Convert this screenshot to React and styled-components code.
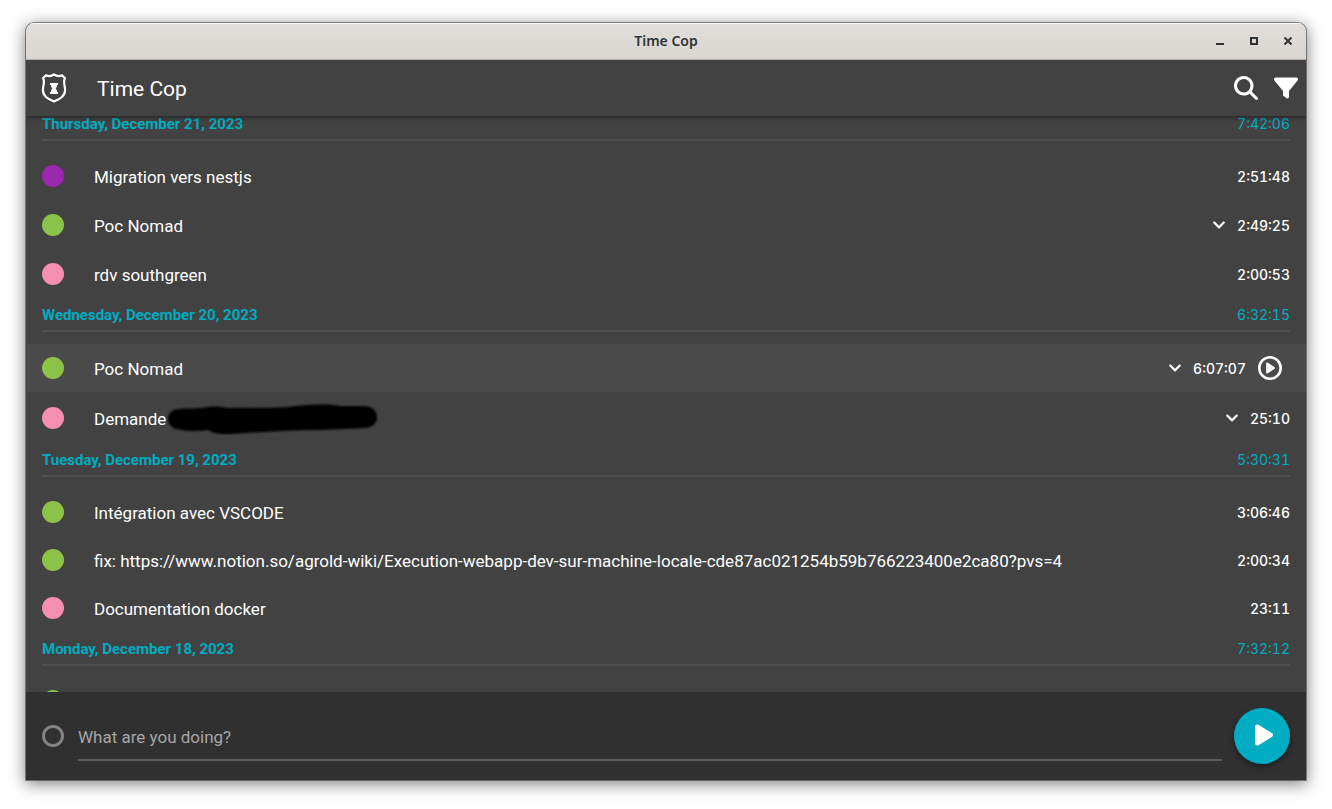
import React, { useLayoutEffect, useRef } from "react";
import styled, { createGlobalStyle } from "styled-components";
import { FaChevronDown } from "react-icons/fa";
import { FaMagnifyingGlass, FaFilter, FaPlay } from "react-icons/fa6";

const GlobalStyle = createGlobalStyle`
  *, *::before, *::after { box-sizing: border-box; }
  body {
    margin: 0;
    background: #fff;
    color: #fff;
    font-family: Roboto, "Liberation Sans", sans-serif;
    font-size: 17px;
  }
`;

const Desktop = styled.div`
  display: flex;
  height: 100vh;
  padding: 23px 26px 29px;
`;

const Window = styled.div`
  flex: 1;
  min-width: 0;
  display: flex;
  flex-direction: column;
  overflow: hidden;
  border-radius: 8px 8px 0 0;
  background: #424242;
  box-shadow: 0 0 0 1px rgba(0, 0, 0, 0.4), 0 3px 16px 1px rgba(0, 0, 0, 0.5);
`;

const TitleBar = styled.header`
  display: grid;
  grid-template-columns: 1fr auto 1fr;
  align-items: center;
  height: 37px;
  flex: none;
  padding: 0 6px;
  color: #2e3436;
  background: linear-gradient(#e1dedb, #dad6d2);
  border-bottom: 1px solid #bfb8b1;
  box-shadow: inset 0 1px #f9f9f8;
`;

const WindowTitle = styled.span`
  grid-column: 2;
  font: 600 14px/20px "Noto Sans", sans-serif;
`;

const WindowControls = styled.div`
  display: flex;
  justify-content: flex-end;
  gap: 10px;
`;

const PlainButton = styled.button`
  display: flex;
  align-items: center;
  justify-content: center;
  width: ${(p) => p.$size}px;
  height: ${(p) => p.$size}px;
  padding: 0;
  border: 0;
  background: none;
  color: inherit;
  cursor: pointer;
`;

const AppBar = styled.div`
  position: relative;
  z-index: 1;
  display: flex;
  align-items: center;
  height: 56px;
  flex: none;
  padding: 0 0 0 13px;
  background: #424242;
  box-shadow: 0 2px 4px rgba(0, 0, 0, 0.4);
`;

const AppTitle = styled.h1`
  flex: 1;
  margin: 0 0 0 28px;
  padding-top: 2px;
  font-size: 21px;
  font-weight: 400;
  line-height: 24px;
`;

const Entries = styled.main`
  flex: 1;
  min-height: 0;
  overflow-y: auto;
  scrollbar-width: none;
`;

const DayHeader = styled.div`
  display: flex;
  justify-content: space-between;
  height: 34px;
  margin: 0 16px 11px;
  padding-top: 9px;
  border-bottom: 2px solid #4f4f4f;
  color: #00acc1;
`;

const DayName = styled.h2`
  margin: 0;
  font-size: 15px;
  font-weight: 700;
  line-height: 16px;
`;

const Duration = styled.time`
  font-family: Inter, sans-serif;
  font-size: 14px;
  line-height: 16px;
  font-variant-numeric: tabular-nums;
`;

const EntryDuration = styled(Duration)`
  margin-left: 2px;
  padding-top: 2px;
  font-weight: 500;
`;

const EntryList = styled.ul`
  margin: 0;
  padding: 0;
  list-style: none;
`;

const EntryRow = styled.li`
  display: flex;
  align-items: center;
  height: ${(p) => (p.$grouped ? 50 : 48)}px;
  padding: 0 16px;
  border: solid transparent;
  border-width: ${(p) => (p.$grouped ? 1 : 0)}px 0;
  background: ${(p) => (p.$hovered ? "#4a4a4a" : "none")} padding-box;
`;

const ProjectDot = styled.span`
  flex: none;
  width: 22px;
  height: 22px;
  border-radius: 50%;
  background: ${(p) => p.$color};
`;

const Description = styled.span`
  flex: 1;
  min-width: 0;
  display: flex;
  align-items: center;
  margin-left: 30px;
  padding-top: 1px;
  line-height: 20px;
  white-space: nowrap;
`;

const EntryTime = styled.div`
  display: flex;
  align-items: center;
  gap: 4px;
`;

const Scribble = styled.svg`
  flex: none;
  width: 216px;
  height: 32px;
`;

const Footer = styled.form`
  display: flex;
  align-items: center;
  gap: 12px;
  height: 88px;
  flex: none;
  padding: 0 16px;
  background: #303030;
`;

const ProjectPicker = styled.button`
  flex: none;
  width: 22px;
  height: 22px;
  padding: 0;
  border: 3px solid #838383;
  border-radius: 50%;
  background: none;
`;

const TaskInput = styled.input`
  flex: 1;
  min-width: 0;
  height: 50px;
  margin-left: 2px;
  padding: 4px 0 0;
  border: 0;
  border-bottom: 2px solid #5c5c5c;
  outline: 0;
  background: none;
  color: #fff;
  font: inherit;
  &::placeholder { color: #a6a6a6; opacity: 1; }
`;

const StartButton = styled.button`
  display: flex;
  align-items: center;
  justify-content: center;
  flex: none;
  width: 56px;
  height: 56px;
  padding: 0 0 2px 4px;
  border: 0;
  border-radius: 50%;
  background: #00acc1;
  color: #fff;
  box-shadow: 0 3px 6px rgba(0, 0, 0, 0.4);
`;

const PURPLE = "#9c27b0";
const GREEN = "#8bc34a";
const PINK = "#f48fb1";

const days = [
  {
    name: "Thursday, December 21, 2023",
    total: "7:42:06",
    entries: [
      { color: PURPLE, text: "Migration vers nestjs", time: "2:51:48" },
      { color: GREEN, text: "Poc Nomad", time: "2:49:25", grouped: true },
      { color: PINK, text: "rdv southgreen", time: "2:00:53" },
    ],
  },
  {
    name: "Wednesday, December 20, 2023",
    total: "6:32:15",
    entries: [
      { color: GREEN, text: "Poc Nomad", time: "6:07:07", grouped: true, hovered: true },
      { color: PINK, text: "Demande", time: "25:10", grouped: true, redacted: true },
    ],
  },
  {
    name: "Tuesday, December 19, 2023",
    total: "5:30:31",
    entries: [
      { color: GREEN, text: "Intégration avec VSCODE", time: "3:06:46" },
      {
        color: GREEN,
        text: "fix: https://www.notion.so/agrold-wiki/Execution-webapp-dev-sur-machine-locale-cde87ac021254b59b766223400e2ca80?pvs=4",
        time: "2:00:34",
      },
      { color: PINK, text: "Documentation docker", time: "23:11" },
    ],
  },
  {
    name: "Monday, December 18, 2023",
    total: "7:32:12",
    entries: [{ color: GREEN, text: "", time: "" }],
  },
];

const Badge = () => (
  <svg width="30" height="32" viewBox="0 0 30 32" fill="none" aria-hidden="true">
    <path
      d="M15 2.500C12.800 3.900 9.500 4.600 7 3.300L4 6.200C6.200 9.500 4 13.500 3.900 18C3.900 24 8.500 26.800 15 29.500C21.500 26.800 26.100 24 26.100 18C26 13.500 23.800 9.500 26 6.200L23 3.300C20.500 4.600 17.200 3.900 15 2.500Z"
      stroke="#fff"
      strokeWidth="2.200"
      strokeLinejoin="round"
    />
    <path d="M11 11h8v2h-1c0 1.800-.6 2.700-1.400 3.500.8.800 1.400 1.700 1.400 3.500h1v2h-8v-2h1c0-1.800.6-2.700 1.400-3.500-.8-.8-1.400-1.700-1.400-3.500h-1z" fill="#fff" />
  </svg>
);

const PlayCircle = () => (
  <svg width="24" height="24" viewBox="0 0 24 24" aria-hidden="true">
    <circle cx="12" cy="12" r="10.700" fill="none" stroke="currentColor" strokeWidth="2.600" />
    <path d="M9 7.200v9.600l7.200-4.800z" fill="currentColor" stroke="currentColor" strokeWidth="1.600" strokeLinejoin="round" />
  </svg>
);

const Redaction = () => (
  <Scribble viewBox="0 0 216 32" aria-hidden="true">
    <defs>
      <filter id="soft" x="-5%" y="-20%" width="110%" height="140%">
        <feGaussianBlur stdDeviation="1" />
      </filter>
    </defs>
    <path
      filter="url(#soft)"
      d="M12 6C22 5 32 6 42 4c8-1 14 0 20 1 20 0 40 0 60-1 16-2 36-4 52-1h24c16 0 18 20 2 22-14 1-30 1-44 2-30 0-60 2-90 4-10 1-18 0-24-4-12 2-24 1-32-1-12-4-10-19 2-20z"
      fill="#000"
    />
  </Scribble>
);

function Entry({ entry }) {
  return (
    <EntryRow $grouped={entry.grouped} $hovered={entry.hovered}>
      <ProjectDot $color={entry.color} />
      <Description>
        {entry.text}
        {entry.redacted && <Redaction />}
      </Description>
      <EntryTime>
        {entry.grouped && (
          <PlainButton type="button" $size={24} aria-label="Expand">
            <FaChevronDown size={14} />
          </PlainButton>
        )}
        <EntryDuration>{entry.time}</EntryDuration>
        {entry.hovered && (
          <PlainButton type="button" $size={40} aria-label="Resume timer">
            <PlayCircle />
          </PlainButton>
        )}
      </EntryTime>
    </EntryRow>
  );
}

export default function App() {
  const listRef = useRef(null);
  useLayoutEffect(() => {
    listRef.current.scrollTop = 9;
  }, []);

  return (
    <>
      <GlobalStyle />
      <Desktop>
        <Window>
          <TitleBar>
            <WindowTitle>Time Cop</WindowTitle>
            <WindowControls>
              <PlainButton type="button" $size={24} aria-label="Minimize">
                <svg width="10" height="10" viewBox="0 0 10 10"><path d="M1 7h8v2H1z" fill="#2e3436" /></svg>
              </PlainButton>
              <PlainButton type="button" $size={24} aria-label="Maximize">
                <svg width="10" height="10" viewBox="0 0 10 10"><path d="M2 2h6v6H2z" fill="none" stroke="#2e3436" strokeWidth="2" /></svg>
              </PlainButton>
              <PlainButton type="button" $size={24} aria-label="Close">
                <svg width="10" height="10" viewBox="0 0 10 10"><path d="M1.500 1.500l7 7M8.500 1.500l-7 7" stroke="#2e3436" strokeWidth="2" /></svg>
              </PlainButton>
            </WindowControls>
          </TitleBar>
          <AppBar>
            <Badge />
            <AppTitle>Time Cop</AppTitle>
            <PlainButton type="button" $size={40} aria-label="Search">
              <FaMagnifyingGlass size={24} />
            </PlainButton>
            <PlainButton type="button" $size={40} aria-label="Filter">
              <FaFilter size={24} />
            </PlainButton>
          </AppBar>
          <Entries ref={listRef}>
            {days.map((day) => (
              <section key={day.name}>
                <DayHeader>
                  <DayName>{day.name}</DayName>
                  <Duration>{day.total}</Duration>
                </DayHeader>
                <EntryList>
                  {day.entries.map((entry, i) => (
                    <Entry key={i} entry={entry} />
                  ))}
                </EntryList>
              </section>
            ))}
          </Entries>
          <Footer onSubmit={(e) => e.preventDefault()}>
            <ProjectPicker type="button" aria-label="Choose project" />
            <TaskInput type="text" aria-label="What are you doing?" placeholder="What are you doing?" />
            <StartButton type="submit" aria-label="Start timer">
              <FaPlay size={24} />
            </StartButton>
          </Footer>
        </Window>
      </Desktop>
    </>
  );
}
